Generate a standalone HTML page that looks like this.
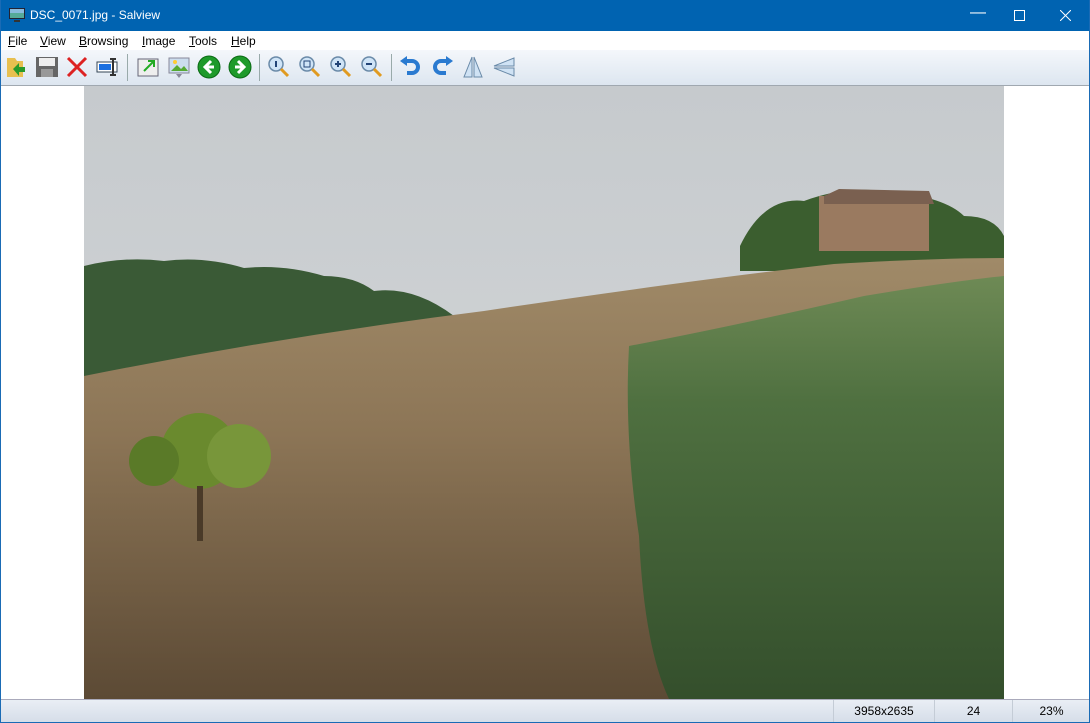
<!DOCTYPE html>
<html><head><style>
*{margin:0;padding:0;box-sizing:border-box}
body{width:1090px;height:723px;overflow:hidden;font-family:"Liberation Sans",sans-serif;background:#fff;position:relative}
.bd{position:absolute;background:#1a6bb5}
.title{position:absolute;left:0;top:0;width:1090px;height:31px;background:#0063b1;color:#fff;font-size:12px}
.title span{position:absolute;left:30px;top:8px}
.menu{position:absolute;top:31px;left:0;width:1090px;height:19px;background:#fff;font-size:12px}
.menu span{position:absolute;top:3px}
.tb{position:absolute;top:50px;left:0;width:1090px;height:36px;background:linear-gradient(#f4f7fb,#dde6f0);border-bottom:1px solid #a0a8b0}
.ic{position:absolute;top:5px;width:24px;height:24px}
.sep{position:absolute;top:4px;width:1px;height:27px;background:#9aa}
.status{position:absolute;top:699px;left:0;width:1090px;height:24px;background:linear-gradient(#e9eef5,#d5dde8);border-top:1px solid #aab;font-size:12px}
.status div{position:absolute;top:0;height:23px;border-left:1px solid #c4ccd6;text-align:center;line-height:23px}
</style></head><body>
<div class="title"><svg style="position:absolute;left:9px;top:8px" width="16" height="15"><rect x="0" y="0" width="16" height="11" fill="#223"/><rect x="1" y="1" width="14" height="9" fill="#5a9"/><rect x="1" y="1" width="14" height="4" fill="#8bd"/><rect x="5" y="12" width="6" height="2" fill="#333"/></svg><span>DSC_0071.jpg - Salview</span>
<span style="left:970px;top:4px;font-size:16px">&#8212;</span>
<svg style="position:absolute;left:1014px;top:10px" width="11" height="11"><rect x=".5" y=".5" width="10" height="10" fill="none" stroke="#fff"/></svg>
<svg style="position:absolute;left:1060px;top:10px" width="11" height="11"><path d="M0 0L11 11M11 0L0 11" stroke="#fff"/></svg></div>
<div class="menu"><span style="left:8px"><u>F</u>ile</span><span style="left:40px"><u>V</u>iew</span><span style="left:79px"><u>B</u>rowsing</span><span style="left:142px"><u>I</u>mage</span><span style="left:189px"><u>T</u>ools</span><span style="left:231px"><u>H</u>elp</span></div>
<div class="tb">
<svg class="ic" style="left:5px" viewBox="0 0 24 24"><path d="M2 3h8l2 3h6v16H2z" fill="#e8c050"/><path d="M8 14l6-6v4h6v5h-6v4z" fill="#2a9a2a"/></svg>
<svg class="ic" style="left:35px" viewBox="0 0 24 24"><rect x="1" y="2" width="22" height="20" fill="#666"/><rect x="4" y="3" width="16" height="8" fill="#eee"/><rect x="6" y="14" width="12" height="8" fill="#999"/></svg>
<svg class="ic" style="left:65px" viewBox="0 0 24 24"><path d="M3 3L21 21M21 3L3 21" stroke="#d22" stroke-width="3"/></svg>
<svg class="ic" style="left:96px" viewBox="0 0 24 24"><rect x="1" y="7" width="20" height="10" fill="#fff" stroke="#345"/><rect x="3" y="9" width="12" height="6" fill="#1a6fe0"/><path d="M17 4v16M14 4h6M14 20h6" stroke="#333" stroke-width="2"/></svg>
<div class="sep" style="left:127px"></div>
<svg class="ic" style="left:136px" viewBox="0 0 24 24"><rect x="2" y="4" width="20" height="17" fill="#eee" stroke="#667"/><path d="M8 16L18 6M12 6h6v6" stroke="#2a2" stroke-width="2" fill="none"/></svg>
<svg class="ic" style="left:167px" viewBox="0 0 24 24"><rect x="2" y="3" width="20" height="15" fill="#cde" stroke="#889"/><path d="M4 16l6-6 4 4 3-3 4 5z" fill="#5a3"/><circle cx="8" cy="7" r="2" fill="#fc3"/><path d="M9 19l3 4 3-4z" fill="#889"/></svg>
<svg class="ic" style="left:197px" viewBox="0 0 24 24"><circle cx="12" cy="12" r="11" fill="#1e9a2a" stroke="#0a6a14"/><path d="M14 6l-6 6 6 6M8 12h9" stroke="#fff" stroke-width="3" fill="none"/></svg>
<svg class="ic" style="left:228px" viewBox="0 0 24 24"><circle cx="12" cy="12" r="11" fill="#1e9a2a" stroke="#0a6a14"/><path d="M10 6l6 6-6 6M16 12H7" stroke="#fff" stroke-width="3" fill="none"/></svg>
<div class="sep" style="left:259px"></div>
<svg class="ic" style="left:267px" viewBox="0 0 24 24"><circle cx="9" cy="9" r="7" fill="#cfe4f7" stroke="#6a8aa8" stroke-width="1.5"/><path d="M14 14l7 7" stroke="#e09a20" stroke-width="3"/><path d="M9 6v6" stroke="#247" stroke-width="2"/></svg>
<svg class="ic" style="left:298px" viewBox="0 0 24 24"><circle cx="9" cy="9" r="7" fill="#cfe4f7" stroke="#6a8aa8" stroke-width="1.5"/><path d="M14 14l7 7" stroke="#e09a20" stroke-width="3"/><rect x="6" y="6" width="6" height="6" fill="none" stroke="#247"/></svg>
<svg class="ic" style="left:329px" viewBox="0 0 24 24"><circle cx="9" cy="9" r="7" fill="#cfe4f7" stroke="#6a8aa8" stroke-width="1.5"/><path d="M14 14l7 7" stroke="#e09a20" stroke-width="3"/><path d="M6 9h6M9 6v6" stroke="#247" stroke-width="2"/></svg>
<svg class="ic" style="left:360px" viewBox="0 0 24 24"><circle cx="9" cy="9" r="7" fill="#cfe4f7" stroke="#6a8aa8" stroke-width="1.5"/><path d="M14 14l7 7" stroke="#e09a20" stroke-width="3"/><path d="M6 9h6" stroke="#247" stroke-width="2"/></svg>
<div class="sep" style="left:391px"></div>
<svg class="ic" style="left:399px" viewBox="0 0 24 24"><path d="M6 6h7a6 6 0 0 1 0 12H8" stroke="#2a7ad0" stroke-width="4" fill="none"/><path d="M1 6l7-5v10z" fill="#2a7ad0"/></svg>
<svg class="ic" style="left:430px" viewBox="0 0 24 24"><path d="M18 6h-7a6 6 0 0 0 0 12h5" stroke="#2a7ad0" stroke-width="4" fill="none"/><path d="M23 6l-7-5v10z" fill="#2a7ad0"/></svg>
<svg class="ic" style="left:461px" viewBox="0 0 24 24"><path d="M11 2L3 22h8zM13 2l8 20h-8z" fill="#cfe2f4" stroke="#6a8aa8"/></svg>
<svg class="ic" style="left:492px" viewBox="0 0 24 24"><path d="M22 3L2 11h20zM22 13L2 13l20 8z" fill="#cfe2f4" stroke="#6a8aa8"/></svg>
</div>
<svg style="position:absolute;left:84px;top:86px" width="920" height="613" viewBox="0 0 920 613">
<defs>
<linearGradient id="sky" x1="0" y1="0" x2="0" y2="1"><stop offset="0" stop-color="#c6cacd"/><stop offset="1" stop-color="#d7dadc"/></linearGradient>
<linearGradient id="soil" x1="0" y1="0" x2="0" y2="1"><stop offset="0" stop-color="#a08a68"/><stop offset=".4" stop-color="#8c7556"/><stop offset="1" stop-color="#5c4a35"/></linearGradient>
<linearGradient id="grass" x1="0" y1="0" x2="0" y2="1"><stop offset="0" stop-color="#6e8a55"/><stop offset=".3" stop-color="#4f7040"/><stop offset="1" stop-color="#344f2c"/></linearGradient>
</defs>
<rect width="920" height="613" fill="url(#sky)"/>
<path d="M0 180 Q40 170 80 175 Q120 170 160 182 Q200 178 240 190 Q270 190 290 205 Q330 200 370 230 L370 290 L0 290Z" fill="#3a5a36"/>
<path d="M656 160 Q680 110 720 115 Q760 100 800 105 Q860 110 880 130 Q910 130 920 150 L920 185 L656 185Z" fill="#3b5e2f"/>
<rect x="735" y="110" width="110" height="55" fill="#9a7a60"/>
<path d="M740 110 L755 103 L845 105 L850 118 L740 118Z" fill="#7a6050"/>
<path d="M0 290 Q200 250 400 225 Q600 195 750 178 Q850 172 920 172 L920 613 L0 613Z" fill="url(#soil)"/>
<path d="M545 260 Q650 240 780 210 Q870 195 920 190 L920 613 L585 613 Q560 560 555 450 Q540 350 545 260Z" fill="url(#grass)"/>
<circle cx="115" cy="365" r="38" fill="#6a8a2e"/><circle cx="70" cy="375" r="25" fill="#5a7a28"/><circle cx="155" cy="370" r="32" fill="#78963a"/>
<rect x="113" y="400" width="6" height="55" fill="#4a3a28"/>
</svg>
<div class="status"><div style="left:833px;width:101px">3958x2635</div><div style="left:934px;width:78px">24</div><div style="left:1012px;width:78px">23%</div></div>
<div class="bd" style="left:0;top:0;width:1px;height:723px"></div>
<div class="bd" style="right:0;top:0;width:1px;height:723px"></div>
<div class="bd" style="left:0;bottom:0;width:1090px;height:1px"></div>
</body></html>
